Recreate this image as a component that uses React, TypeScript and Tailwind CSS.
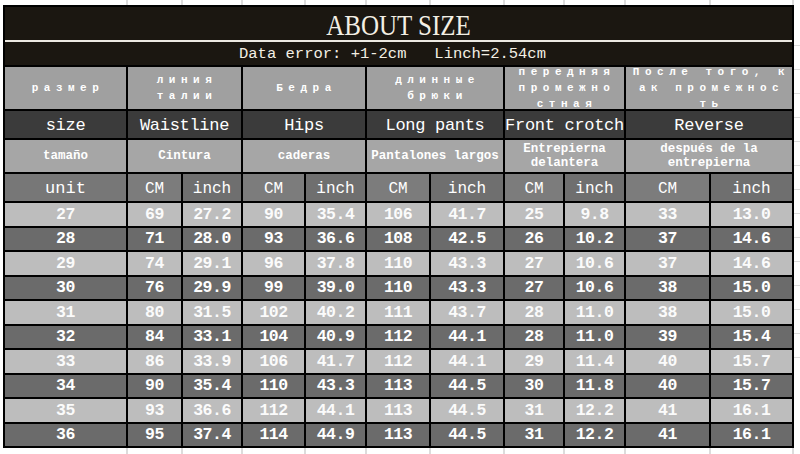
import React from 'react'

type HeaderCell = {
  text: string
  span: number
}

const cols = 'grid grid-cols-[121px_53px_58px_61px_59px_62px_72px_58px_59px_83px_81px]'

const russian: HeaderCell[] = [
  { text: 'размер', span: 1 },
  { text: 'линия\nталии', span: 2 },
  { text: 'Бедра', span: 2 },
  { text: 'длинные\nбрюки', span: 2 },
  { text: 'передняя\nпромежно\nстная', span: 2 },
  { text: 'После того, к\nак промежнос\nть', span: 2 },
]

const english: HeaderCell[] = [
  { text: 'size', span: 1 },
  { text: 'Waistline', span: 2 },
  { text: 'Hips', span: 2 },
  { text: 'Long pants', span: 2 },
  { text: 'Front crotch', span: 2 },
  { text: 'Reverse', span: 2 },
]

const spanish: HeaderCell[] = [
  { text: 'tamaño', span: 1 },
  { text: 'Cintura', span: 2 },
  { text: 'caderas', span: 2 },
  { text: 'Pantalones largos', span: 2 },
  { text: 'Entrepierna\ndelantera', span: 2 },
  { text: 'después de la\nentrepierna', span: 2 },
]

const sizes: string[][] = [
  ['27', '69', '27.2', '90', '35.4', '106', '41.7', '25', '9.8', '33', '13.0'],
  ['28', '71', '28.0', '93', '36.6', '108', '42.5', '26', '10.2', '37', '14.6'],
  ['29', '74', '29.1', '96', '37.8', '110', '43.3', '27', '10.6', '37', '14.6'],
  ['30', '76', '29.9', '99', '39.0', '110', '43.3', '27', '10.6', '38', '15.0'],
  ['31', '80', '31.5', '102', '40.2', '111', '43.7', '28', '11.0', '38', '15.0'],
  ['32', '84', '33.1', '104', '40.9', '112', '44.1', '28', '11.0', '39', '15.4'],
  ['33', '86', '33.9', '106', '41.7', '112', '44.1', '29', '11.4', '40', '15.7'],
  ['34', '90', '35.4', '110', '43.3', '113', '44.5', '30', '11.8', '40', '15.7'],
  ['35', '93', '36.6', '112', '44.1', '113', '44.5', '31', '12.2', '41', '16.1'],
  ['36', '95', '37.4', '114', '44.9', '113', '44.5', '31', '12.2', '41', '16.1'],
]

const spanClass = (span: number) => (span === 2 ? 'col-span-2' : 'col-span-1')

// faint spreadsheet gridlines peeking out around the table
function GridStrip({ height }: { height: string }) {
  return (
    <div className={`${cols} gap-[2px] ml-[5px] ${height}`}>
      {Array.from({ length: 11 }).map((_, i) => (
        <div key={i} className="border-r-2 border-[#dcdcdc] translate-x-[2px]" />
      ))}
    </div>
  )
}

function HeaderRow({ cells, className, textClass }: { cells: HeaderCell[]; className: string; textClass: string }) {
  return (
    <>
      {cells.map((c, i) => (
        <div
          key={i}
          className={`${spanClass(c.span)} ${className} flex items-center justify-center overflow-hidden text-white text-center whitespace-nowrap`}
        >
          <div className={textClass}>
            {c.text.split('\n').map((line, j) => (
              <div key={j} className="whitespace-pre">{line}</div>
            ))}
          </div>
        </div>
      ))}
    </>
  )
}

export default function App() {
  return (
    <div className="w-[800px] h-[454px] bg-white overflow-hidden font-['Liberation_Mono',monospace]">
      <GridStrip height="h-[5px]" />

      <div className="flex">
        <div className="ml-[3px] w-[791px] bg-black p-[2px] flex flex-col">
          {/* Title */}
          <div className="h-[33px] bg-[#1b1711] flex items-center justify-center">
            <span className="font-['Liberation_Serif',serif] text-[25px] leading-none text-[#f3efe4] scale-y-[1.2] pt-[1px]">
              ABOUT SIZE
            </span>
          </div>
          <div className="h-[2px] bg-[#ece9e2]" />
          <div className="h-[23px] bg-[#1b1711] flex items-center justify-center">
            <span className="text-[15.5px] leading-none text-[#f3efe4] whitespace-pre pt-[2px] pr-[12px]">
              Data error: +1-2cm   Linch=2.54cm
            </span>
          </div>
          <div className="h-[2px]" />

          <div className={`${cols} gap-[2px] grid-rows-[42px_27px_32px_27px_repeat(10,22.5px)]`}>
            <HeaderRow
              cells={russian}
              className="bg-[#a0a0a0]"
              textClass="text-[11px] font-bold leading-[16px] tracking-[5.5px] pl-[5px]"
            />
            <HeaderRow
              cells={english}
              className="bg-[#3b3b3b]"
              textClass="text-[17px] leading-none pt-[2px] tracking-[-0.3px]"
            />
            <HeaderRow
              cells={spanish}
              className="bg-[#a6a6a6]"
              textClass="text-[12.5px] font-bold leading-[14px]"
            />

            {/* Unit row */}
            <div className="bg-[#777777] flex items-center justify-center text-white text-[17px] leading-none pt-[2px]">unit</div>
            {Array.from({ length: 5 }).map((_, i) => (
              <React.Fragment key={i}>
                <div className="bg-[#7c7c7c] flex items-center justify-center text-white text-[16px] leading-none pt-[2px]">CM</div>
                <div className="bg-[#6f6f6f] flex items-center justify-center text-white text-[16px] leading-none pt-[2px]">inch</div>
              </React.Fragment>
            ))}

            {/* Size data */}
            {sizes.map((row, r) =>
              row.map((v, c) => (
                <div
                  key={`${r}-${c}`}
                  className={`flex items-center justify-center text-[16.5px] font-bold leading-none pt-[1px] tracking-[-0.5px] ${
                    r % 2 === 0 ? 'bg-[#bdbdbd] text-[#fbfbfb]' : 'bg-[#6b6b6b] text-white'
                  }`}
                >
                  {v}
                </div>
              ))
            )}
          </div>
        </div>
        <div className="flex-1 flex flex-col pt-[40px] gap-[23px]">
          {Array.from({ length: 14 }).map((_, i) => (
            <div key={i} className="h-[1px] bg-[#dcdcdc]" />
          ))}
        </div>
      </div>

      <GridStrip height="h-[6px]" />
    </div>
  )
}
